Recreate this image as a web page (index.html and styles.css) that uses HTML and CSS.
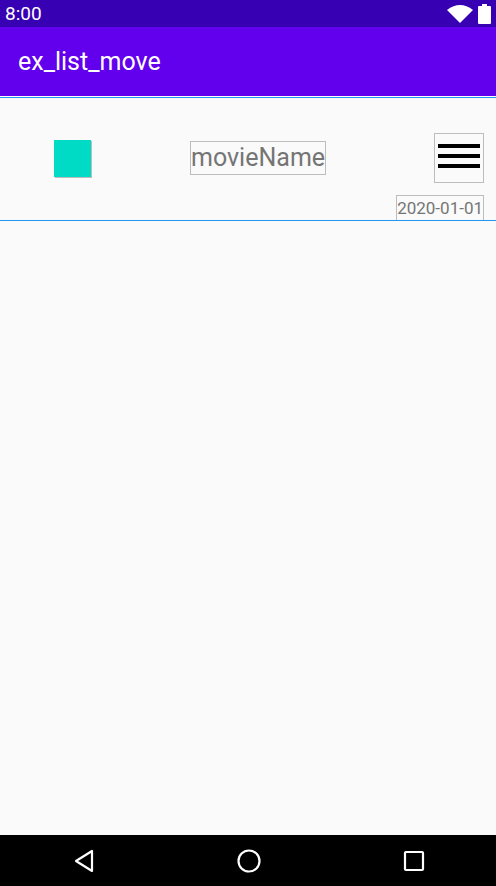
FILE: index.html
```html
<!DOCTYPE html>
<html lang="en">
<head>
    <meta charset="UTF-8">
    <meta name="viewport" content="width=device-width, initial-scale=1.0">
    <title>ex_list_move</title>
    <link rel="stylesheet" href="styles.css">
</head>
<body>
    <div class="status-bar">
        <span class="status-time">8:00</span>
        <div class="status-icons">
            <svg width="26" height="18" viewBox="0 0 26 18">
                <path d="M0 5 Q13 -5 26 5 L13 18 Z" fill="#fff"/>
            </svg>
            <svg width="13" height="20" viewBox="0 0 13 20">
                <rect x="4" y="0" width="5" height="3" fill="#fff"/>
                <rect x="0" y="2" width="13" height="18" rx="1" fill="#fff"/>
            </svg>
        </div>
    </div>
    <div class="app-bar">ex_list_move</div>

    <div class="list">
        <div class="item">
            <div class="item-top">
                <div class="item-image"></div>
                <span class="item-name">movieName</span>
                <div class="item-menu">
                    <span></span>
                    <span></span>
                    <span></span>
                </div>
            </div>
            <span class="item-date">2020-01-01</span>
        </div>
    </div>

    <div class="nav-bar">
        <svg width="22" height="26" viewBox="0 0 22 26">
            <path d="M19 3 L19 23 L3 13 Z" fill="none" stroke="#fff" stroke-width="2.2" stroke-linejoin="round"/>
        </svg>
        <svg width="26" height="26" viewBox="0 0 26 26">
            <circle cx="13" cy="13" r="10.5" fill="none" stroke="#fff" stroke-width="2.2"/>
        </svg>
        <svg width="24" height="24" viewBox="0 0 24 24">
            <rect x="3" y="3" width="18" height="18" rx="1" fill="none" stroke="#fff" stroke-width="2.2"/>
        </svg>
    </div>
</body>
</html>
```

FILE: styles.css
```css
body {
    font-family: Roboto, "Noto Sans", sans-serif;
    margin: 0;
    height: 886px;
    display: flex;
    flex-direction: column;
    background-color: #fafafa;
}
.status-bar {
    height: 27px;
    background-color: #3700b3;
    color: white;
    display: flex;
    align-items: center;
    justify-content: space-between;
    padding: 0 5px;
}
.status-time {
    font-size: 19px;
}
.status-icons {
    display: flex;
    align-items: center;
    gap: 5px;
}
.app-bar {
    height: 69px;
    background-color: #6200ee;
    color: white;
    font-size: 25px;
    display: flex;
    align-items: center;
    padding-left: 18px;
}
.list {
    flex: 1;
    border-top: 1px solid #ffffff;
}
.item {
    display: flex;
    flex-direction: column;
    padding: 35px 12px 0 54px;
    border-top: 1px solid #2196f3;
    border-bottom: 1px solid #2196f3;
}
.item-top {
    display: flex;
    align-items: center;
}
.item-image {
    width: 37px;
    height: 37px;
    background-color: #00dbc5;
    box-shadow: 1px 1px 0 #bdbdbd;
}
.item-name {
    margin-left: 99px;
    border: 1px solid #bdbdbd;
    color: #757575;
    font-size: 25px;
    line-height: 32px;
}
.item-menu {
    margin-left: auto;
    width: 50px;
    height: 50px;
    box-sizing: border-box;
    border: 1px solid #bdbdbd;
    display: flex;
    flex-direction: column;
    align-items: center;
    justify-content: center;
    gap: 6px;
    padding-bottom: 5px;
}
.item-menu span {
    width: 42px;
    height: 4px;
    background-color: #000;
}
.item-date {
    align-self: flex-end;
    margin-top: 12px;
    border: 1px solid #bdbdbd;
    border-bottom: none;
    color: #757575;
    font-size: 17px;
    line-height: 24px;
}
.nav-bar {
    height: 51px;
    background-color: #000;
    display: flex;
    align-items: center;
    justify-content: space-between;
    padding: 0 70px 0 73px;
}
```
